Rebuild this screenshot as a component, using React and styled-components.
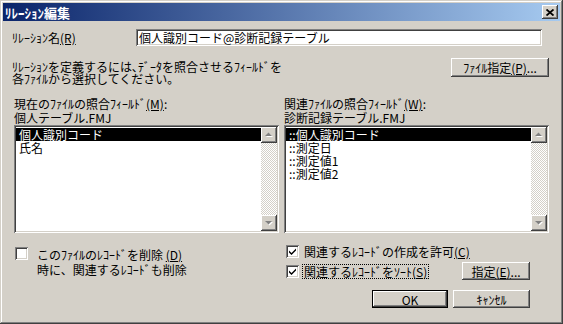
import React from 'react'
import styled, { createGlobalStyle } from 'styled-components'

const GlobalStyle = createGlobalStyle`
  body {
    margin: 0;
    background: #d4d0c8;
    overflow: hidden;
  }
  * { box-sizing: border-box; }
`;

const raised = `box-shadow: inset -1px -1px #404040, inset 1px 1px #ffffff, inset -2px -2px #808080, inset 2px 2px #d4d0c8;`;
const sunken = `box-shadow: inset 1px 1px #808080, inset -1px -1px #ffffff, inset 2px 2px #404040, inset -2px -2px #d4d0c8;`;

const Dialog = styled.div`
  width: 563px;
  height: 324px;
  padding: 3px;
  background: #d4d0c8;
  box-shadow: inset -1px -1px #404040, inset 1px 1px #d4d0c8, inset -2px -2px #808080, inset 2px 2px #ffffff;
  font: 12px/13px "Noto Sans CJK JP", "Noto Sans", sans-serif;
  color: #000;
  display: flex;
  flex-direction: column;
`;

const TitleBar = styled.div`
  height: 18px;
  display: flex;
  align-items: center;
  justify-content: space-between;
  padding: 0 2px 0 2px;
  background: linear-gradient(to right, #0a246a, #a6caf0);
  color: #fff;
  font-size: 13px;
  font-weight: bold;
`;

const CloseBox = styled.div`
  width: 16px;
  height: 14px;
  background: #d4d0c8;
  ${raised}
  display: flex;
  align-items: center;
  justify-content: center;
`;

const Content = styled.div`
  padding: 0 11px 0 9px;
  display: flex;
  flex-direction: column;
`;

const NameRow = styled.div`
  margin-top: 8px;
  display: flex;
  align-items: center;
`;

const NameLabel = styled.div`
  width: 124px;
`;

const TextField = styled.div`
  flex: 1;
  height: 17px;
  margin-right: 7px;
  padding: 2px 0 0 3px;
  background: #fff;
  ${sunken}
`;

const DescRow = styled.div`
  margin-top: 12px;
  display: flex;
  justify-content: space-between;
  align-items: flex-start;
`;

const Desc = styled.div`
  padding-top: 3px;
  line-height: 12px;
`;

const Button = styled.div`
  width: ${p => p.w}px;
  height: ${p => p.h || 18}px;
  display: flex;
  align-items: center;
  justify-content: center;
  background: #d4d0c8;
  ${p => p.primary
    ? `box-shadow: inset 0 0 0 1px #000, inset -2px -2px #404040, inset 2px 2px #ffffff, inset -3px -3px #808080;`
    : raised}
`;

const Key = styled.span`
  text-decoration: underline;
  text-underline-offset: 1px;
`;

const Columns = styled.div`
  margin-top: ${p => p.top}px;
  padding-left: 2px;
  display: grid;
  grid-template-columns: 265px 265px;
  column-gap: 5px;
`;

const Column = styled.div`
  display: flex;
  flex-direction: column;
  padding-left: ${p => p.pad || 0}px;
`;

const FieldLabel = styled.div`
  line-height: 14px;
`;

const ListBox = styled.div`
  margin-top: 0;
  height: 108px;
  padding: 2px;
  background: #fff;
  ${sunken}
  display: flex;
`;

const Items = styled.div`
  flex: 1;
  padding-top: 1px;
`;

const Item = styled.div`
  height: 13px;
  line-height: 13px;
  padding-left: 3px;
  background: ${p => (p.selected ? '#000' : 'transparent')};
  color: ${p => (p.selected ? '#fff' : '#000')};
`;

const ScrollBar = styled.div`
  width: 16px;
  display: flex;
  flex-direction: column;
`;

const ArrowBtn = styled.div`
  width: 16px;
  height: 16px;
  background: #d4d0c8;
  ${raised}
`;

const Track = styled.div`
  flex: 1;
  background: repeating-conic-gradient(#ffffff 0 25%, #d4d0c8 0 50%) 0 0 / 2px 2px;
`;

const CheckRow = styled.div`
  display: flex;
  align-items: ${p => (p.top ? 'flex-start' : 'center')};
  justify-content: space-between;
  margin-top: ${p => p.mt || 0}px;
  height: ${p => p.h}px;
  padding-right: ${p => p.pr || 0}px;
`;

const CheckItem = styled.div`
  display: flex;
  align-items: ${p => (p.top ? 'flex-start' : 'center')};
`;

const Box = styled.div`
  width: 13px;
  height: 13px;
  margin-right: ${p => p.gap}px;
  background: #fff;
  ${sunken}
  display: flex;
  align-items: center;
  justify-content: center;
  flex: none;
`;

const CheckText = styled.div`
  line-height: ${p => p.lh || 13}px;
  padding: 0 1px;
  outline: ${p => (p.focus ? '1px dotted #000' : 'none')};
`;

const ButtonRow = styled.div`
  margin-top: 10px;
  display: flex;
  justify-content: flex-end;
  gap: 5px;
  padding-right: 19px;
`;

const Arrow = ({ down }) => (
  <svg width="16" height="16" viewBox="0 0 16 16">
    {down ? (
      <>
        <polygon points="5,7 12,7 8.5,10.5" fill="#fff" />
        <polygon points="4,6 11,6 7.5,9.5" fill="#808080" />
      </>
    ) : (
      <>
        <polygon points="5,10 12,10 8.5,6.5" fill="#fff" />
        <polygon points="4,9 11,9 7.5,5.5" fill="#808080" />
      </>
    )}
  </svg>
);

const Check = () => (
  <svg width="9" height="9" viewBox="0 0 9 9">
    <path d="M1 3.5 L3.5 6 L8 1.5 L8 3.5 L3.5 8 L1 5.5 Z" fill="#000" />
  </svg>
);

const List = ({ items }) => (
  <ListBox>
    <Items>
      {items.map((it, i) => (
        <Item key={it} selected={i === 0}>{it}</Item>
      ))}
    </Items>
    <ScrollBar>
      <ArrowBtn><Arrow /></ArrowBtn>
      <Track />
      <ArrowBtn><Arrow down /></ArrowBtn>
    </ScrollBar>
  </ListBox>
);

export default function App() {
  return (
    <Dialog>
      <GlobalStyle />
      <TitleBar>
        <span>ﾘﾚｰｼｮﾝ編集</span>
        <CloseBox>
          <svg width="8" height="7" viewBox="0 0 8 7">
            <path d="M0.5 0.5 L7.5 6.5 M7.5 0.5 L0.5 6.5" stroke="#000" strokeWidth="1.8" />
          </svg>
        </CloseBox>
      </TitleBar>
      <Content>
        <NameRow>
          <NameLabel>ﾘﾚｰｼｮﾝ名<Key>(R)</Key></NameLabel>
          <TextField>個人識別コード@診断記録テーブル</TextField>
        </NameRow>
        <DescRow>
          <Desc>
            ﾘﾚｰｼｮﾝを定義するには､ﾃﾞｰﾀを照合させるﾌｨｰﾙﾄﾞを<br />
            各ﾌｧｲﾙから選択してください｡
          </Desc>
          <Button w={98} h={19}>ﾌｧｲﾙ指定<Key>(P)</Key>...</Button>
        </DescRow>
        <Columns top={12}>
          <Column>
            <FieldLabel>現在のﾌｧｲﾙの照合ﾌｨｰﾙﾄﾞ<Key>(M)</Key>:</FieldLabel>
            <FieldLabel>個人テーブル.FMJ</FieldLabel>
            <List items={['個人識別コード', '氏名']} />
          </Column>
          <Column>
            <FieldLabel>関連ﾌｧｲﾙの照合ﾌｨｰﾙﾄﾞ<Key>(W)</Key>:</FieldLabel>
            <FieldLabel>診断記録テーブル.FMJ</FieldLabel>
            <List items={['::個人識別コード', '::測定日', '::測定値1', '::測定値2']} />
          </Column>
        </Columns>
        <Columns top={0}>
          <Column pad={1}>
            <CheckRow mt={14} top>
              <CheckItem top>
                <Box gap={8} />
                <CheckText lh={15}>
                  このﾌｧｲﾙのﾚｺｰﾄﾞを削除 <Key>(D)</Key><br />
                  時に、関連するﾚｺｰﾄﾞも削除
                </CheckText>
              </CheckItem>
            </CheckRow>
          </Column>
          <Column pad={2}>
            <CheckRow mt={10} h={16}>
              <CheckItem>
                <Box gap={4}><Check /></Box>
                <CheckText>関連するﾚｺｰﾄﾞの作成を許可<Key>(C)</Key></CheckText>
              </CheckItem>
            </CheckRow>
            <CheckRow mt={3} h={18} pr={19}>
              <CheckItem>
                <Box gap={4}><Check /></Box>
                <CheckText focus>関連するﾚｺｰﾄﾞをｿｰﾄ<Key>(S)</Key></CheckText>
              </CheckItem>
              <Button w={68}>指定<Key>(E)</Key>...</Button>
            </CheckRow>
            <ButtonRow>
              <Button w={76} primary>OK</Button>
              <Button w={77}>ｷｬﾝｾﾙ</Button>
            </ButtonRow>
          </Column>
        </Columns>
      </Content>
    </Dialog>
  );
}
